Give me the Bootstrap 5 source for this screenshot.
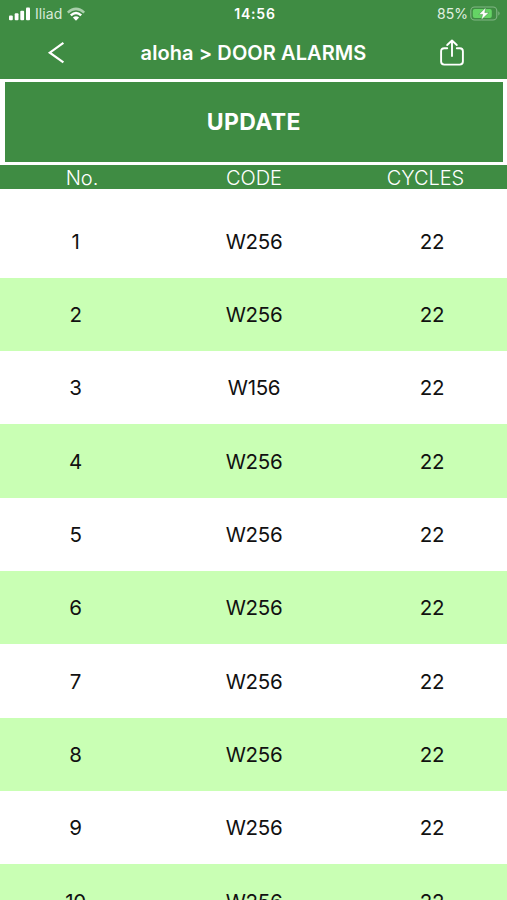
<!DOCTYPE html>
<html lang="en">
<head>
<meta charset="utf-8">
<meta name="viewport" content="width=device-width, initial-scale=1">
<title>Door alarms</title>
<link href="https://cdn.jsdelivr.net/npm/bootstrap@5.3.0/dist/css/bootstrap.min.css" rel="stylesheet">
<style>
  body { font-family: Inter, "Liberation Sans", sans-serif; color: #111; height: 900px; }
  .brand { background: #3f8c43; color: #fff; }
  .status { height: 27px; font-size: 14px; line-height: 27px; padding: 0 6px 0 8px; }
  .status > * { flex: 1 1 0; }
  .status .clock { font-weight: 600; letter-spacing: .8px; padding-left: 1px; }
  .status svg, .titlebar svg { display: block; }
  .carrier { margin-left: 4px; letter-spacing: .1px; color: #d8ead9; }
  .wifi { margin-left: 4px; }
  .battery { margin-left: 2px; }
  .power { color: #e2f0e2; }
  .titlebar { height: 52px; padding: 0 42px 0 47px; }
  .titlebar h1 { font-size: 20px; font-weight: 600; letter-spacing: .08px; line-height: 52px; margin-left: 3px !important; }
  .update-wrap { padding: 2.6px 4px 2.8px 4.6px; }
  .update { height: 80.4px; font-size: 23px; font-weight: 700; letter-spacing: .35px; }
  .update:hover { background: #367a3a; color: #fff; }
  .cells { display: grid; text-align: center; align-items: center; }
  .heads { grid-template-columns: 164px 1fr 163px; height: 24.6px; font-size: 20px; font-weight: 350; line-height: 24px; letter-spacing: -.05px; padding-top: 1px; }
  .alarms { padding-top: 15px; }
  .alarms .cells { grid-template-columns: 151px 1fr 150px; height: 73.33px; font-size: 20.5px; letter-spacing: -.3px; padding-top: 2px; }
  .alarms .cells:nth-child(even) { background: #c9ffb4; }
</style>
</head>
<body class="bg-white overflow-hidden">
<header class="brand">
  <div class="status d-flex align-items-center">
    <div class="d-flex align-items-center">
      <svg width="23" height="14" viewBox="0 0 23 14" fill="#fff"><rect x="1" y="8.5" width="3.8" height="4.7" rx="1"/><rect x="6.7" y="6.3" width="3.8" height="6.9" rx="1"/><rect x="12.3" y="3.8" width="3.8" height="9.4" rx="1"/><rect x="18" y="0.4" width="4" height="12.8" rx="1"/></svg>
      <span class="carrier">Iliad</span>
      <svg class="wifi" width="20" height="16" viewBox="0 0 20 16" fill="none" stroke-width="2.5"><path d="M1.8 6.6Q10-.8 18.2 6.6" stroke="#a9cfab"/><path d="M4.8 9.4Q10 4.6 15.2 9.4" stroke="#fff"/><path d="M6.9 11.6Q10 9 13.1 11.6L10 14.8Z" fill="#fff"/></svg>
    </div>
    <div class="clock text-center">14:56</div>
    <div class="power d-flex align-items-center justify-content-end">
      <span>85%</span>
      <svg class="battery" width="31" height="16" viewBox="0 0 31 16"><rect x=".8" y="1" width="26" height="13" rx="3.8" fill="none" stroke="#82b685" stroke-width="1.1"/><path d="M28.3 5.3Q31 7.5 28.3 9.8Z" fill="#82b685"/><rect x="2.8" y="3" width="19" height="9" rx="2" fill="#65d465"/><path d="M15.8 1.5 8.8 8.4H12.6L11.2 14 19 6.6H14.8Z" fill="#fff" stroke="#3f8c43" stroke-width=".5"/></svg>
    </div>
  </div>
  <div class="titlebar d-flex align-items-center justify-content-between">
    <a href="#" aria-label="Back"><svg width="18" height="24" viewBox="0 0 18 24" fill="none" stroke="#fff" stroke-width="2.2"><path d="M16.4 1.9 2.8 11.7 16.4 21.4"/></svg></a>
    <h1 class="m-0">aloha &gt; DOOR ALARMS</h1>
    <a href="#" aria-label="Share"><svg width="26" height="28" viewBox="0 0 26 28" fill="none" stroke="#fff" stroke-width="1.9" stroke-linecap="round" stroke-linejoin="round"><path d="M8.2 9.2H5.3Q2.1 9.2 2.1 12.2V22.6Q2.1 25.6 5.3 25.6H20.7Q23.9 25.6 23.9 22.6V12.2Q23.9 9.2 20.7 9.2H17.8M13 17V2M8.2 6 13 1.5 17.8 6"/></svg></a>
  </div>
</header>
<main>
  <div class="update-wrap"><button type="button" class="btn brand update w-100 rounded-0 border-0 p-0">UPDATE</button></div>
  <div class="brand cells heads"><div>No.</div><div>CODE</div><div>CYCLES</div></div>
  <div class="alarms">
    <div class="cells"><div>1</div><div>W256</div><div>22</div></div>
    <div class="cells"><div>2</div><div>W256</div><div>22</div></div>
    <div class="cells"><div>3</div><div>W156</div><div>22</div></div>
    <div class="cells"><div>4</div><div>W256</div><div>22</div></div>
    <div class="cells"><div>5</div><div>W256</div><div>22</div></div>
    <div class="cells"><div>6</div><div>W256</div><div>22</div></div>
    <div class="cells"><div>7</div><div>W256</div><div>22</div></div>
    <div class="cells"><div>8</div><div>W256</div><div>22</div></div>
    <div class="cells"><div>9</div><div>W256</div><div>22</div></div>
    <div class="cells"><div>10</div><div>W256</div><div>22</div></div>
  </div>
</main>
<script src="https://cdn.jsdelivr.net/npm/bootstrap@5.3.0/dist/js/bootstrap.bundle.min.js"></script>
</body>
</html>
